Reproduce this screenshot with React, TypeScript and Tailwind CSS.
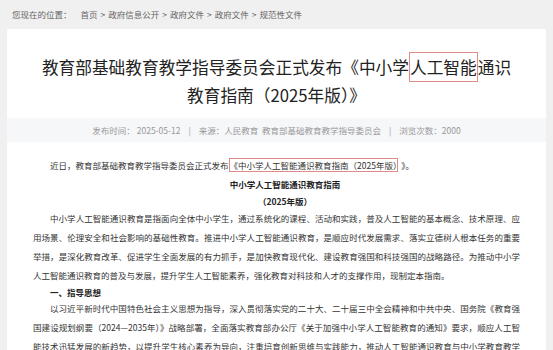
import React from 'react';

const font = { fontFamily: '"Noto Sans CJK SC", "Noto Sans", sans-serif' };

const crumbs = ['首页', '政府信息公开', '政府文件', '政府文件', '规范性文件'];

export default function App() {
  return (
    <div className="min-h-[350px] bg-[#f0f0f0] text-[#333]" style={font}>
      {/* 面包屑 */}
      <div className="flex h-[29px] items-center pl-[12px] text-[8.5px] text-[#666]">
        <span>您现在的位置：</span>
        <span className="ml-[9px]">
          {crumbs.map((c, i) => (
            <span key={i}>
              {i > 0 && <span className="mx-[3px]">&gt;</span>}
              {c}
            </span>
          ))}
        </span>
      </div>

      <div className="mx-[7px] bg-white pb-4">
        <h1 className="px-[30px] pt-[24px] text-center text-[16.7px] leading-[28px] font-normal text-[#222]">
          教育部基础教育教学指导委员会正式发布《中小学
          <span className="border border-[#e08a8a] py-[2px]">人工智能</span>
          通识教育指南（2025年版）》
        </h1>

        <div className="mt-[9px] flex h-[24px] items-center justify-center bg-[#f6f7f9] text-[8.5px] text-[#999]">
          <span>发布时间： 2025-05-12</span>
          <span className="mx-[8px]">|</span>
          <span>来源：人民教育&nbsp;&nbsp;教育部基础教育教学指导委员会</span>
          <span className="mx-[8px]">|</span>
          <span>浏览次数：2000</span>
        </div>

        <div className="mt-[14px] px-[26px] text-justify text-[8.5px] leading-[19px] text-[#333]">
          <p className="indent-[2em]">
            近日，教育部基础教育教学指导委员会正式发布
            <span className="border border-[#e08a8a]">《中小学人工智能通识教育指南（2025年版）</span>
            <span className="ml-[3px]">》。</span>
          </p>
          <p className="indent-[2em] text-center font-bold text-[#222]">中小学人工智能通识教育指南</p>
          <p className="indent-[2em] text-center leading-[15px] font-bold text-[#222]">（2025年版）</p>
          <p className="indent-[2em]">
            中小学人工智能通识教育是指面向全体中小学生，通过系统化的课程、活动和实践，普及人工智能的基本概念、技术原理、应用场景、伦理安全和社会影响的基础性教育。推进中小学人工智能通识教育，是顺应时代发展需求、落实立德树人根本任务的重要举措，是深化教育改革、促进学生全面发展的有力抓手，是加快教育现代化、建设教育强国和科技强国的战略路径。为推动中小学人工智能通识教育的普及与发展，提升学生人工智能素养，强化教育对科技和人才的支撑作用，现制定本指南。
          </p>
          <p className="indent-[2em] leading-[14px] font-bold text-[#222]">一、指导思想</p>
          <p className="indent-[2em]">
            以习近平新时代中国特色社会主义思想为指导，深入贯彻落实党的二十大、二十届三中全会精神和中共中央、国务院《教育强国建设规划纲要（2024—2035年）》战略部署，全面落实教育部办公厅《关于加强中小学人工智能教育的通知》要求，顺应人工智能技术迅猛发展的新趋势，以提升学生核心素养为导向，注重培育创新思维与实践能力，推动人工智能通识教育与中小学教育教学深度融合。
          </p>
        </div>
      </div>
    </div>
  );
}
